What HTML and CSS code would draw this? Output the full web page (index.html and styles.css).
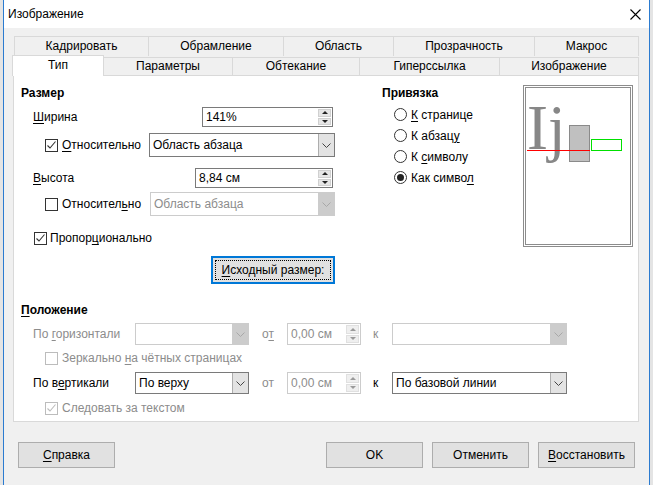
FILE: index.html
```html
<!DOCTYPE html>
<html lang="ru">
<head>
<meta charset="utf-8">
<title>Изображение</title>
<link rel="stylesheet" href="styles.css">
</head>
<body>
<div class="window">
  <div class="titlebar">
    <span class="title">Изображение</span>
    <svg class="close" width="11" height="11" viewBox="0 0 11 11"><path d="M0.5 0.5 L10.5 10.5 M10.5 0.5 L0.5 10.5" stroke="#000" stroke-width="1.1" fill="none"/></svg>
  </div>
  <div class="main">
    <div class="tabs row1">
      <div class="tab w1">Кадрировать</div>
      <div class="tab w2">Обрамление</div>
      <div class="tab w3">Область</div>
      <div class="tab w4">Прозрачность</div>
      <div class="tab w5">Макрос</div>
    </div>
    <div class="tabs row2">
      <div class="tab sel w6">Тип</div>
      <div class="tab w7">Параметры</div>
      <div class="tab w8">Обтекание</div>
      <div class="tab w9">Гиперссылка</div>
      <div class="tab w10">Изображение</div>
    </div>
    <div class="panel">
      <div class="top">
        <div class="col-size">
          <div class="h">Размер</div>
          <div class="row r-w">
            <span class="lbl ind1"><u>Ш</u>ирина</span>
            <div class="spin sw1"><span class="val">141%</span><span class="sbtns"><span class="sb"><i class="up"></i></span><span class="sb"><i class="dn"></i></span></span></div>
          </div>
          <div class="row r-rel">
            <span class="cb ind2"><svg width="11" height="11" viewBox="0 0 11 11"><polyline points="1.5,5.5 4,8 9.5,1.5" fill="none" stroke="#333" stroke-width="1.1"/></svg></span>
            <span class="lbl cbl"><u>О</u>тносительно</span>
            <div class="sel-box sb1"><span class="val">Область абзаца</span><span class="dd"><svg width="9" height="5" viewBox="0 0 9 5"><polyline points="0.5,0.5 4.5,4.5 8.5,0.5" fill="none" stroke="#444" stroke-width="1"/></svg></span></div>
          </div>
          <div class="row r-h">
            <span class="lbl ind1"><u>В</u>ысота</span>
            <div class="spin sw2"><span class="val">8,84 см</span><span class="sbtns"><span class="sb"><i class="up"></i></span><span class="sb"><i class="dn"></i></span></span></div>
          </div>
          <div class="row r-rel2">
            <span class="cb ind2"></span>
            <span class="lbl cbl">Относител<u>ь</u>но</span>
            <div class="sel-box sb2 dis"><span class="val">Область абзаца</span><span class="dd"><svg width="9" height="5" viewBox="0 0 9 5"><polyline points="0.5,0.5 4.5,4.5 8.5,0.5" fill="none" stroke="#a8a8a8" stroke-width="1"/></svg></span></div>
          </div>
          <div class="row r-prop">
            <span class="cb ind3"><svg width="11" height="11" viewBox="0 0 11 11"><polyline points="1.5,5.5 4,8 9.5,1.5" fill="none" stroke="#333" stroke-width="1.1"/></svg></span>
            <span class="lbl cbl2">Пропор<u>ц</u>ионально</span>
          </div>
          <div class="row r-btn">
            <div class="btn focus"><span class="focusrect"><u>И</u>сходный размер:</span></div>
          </div>
        </div>
        <div class="col-anchor">
          <div class="h">Привязка</div>
          <div class="radios">
            <div class="rrow"><span class="radio"></span><span class="lbl"><u>К</u> странице</span></div>
            <div class="rrow"><span class="radio"></span><span class="lbl">К абзац<u>у</u></span></div>
            <div class="rrow"><span class="radio"></span><span class="lbl">К <u>с</u>имволу</span></div>
            <div class="rrow"><span class="radio on"></span><span class="lbl">Как симво<u>л</u></span></div>
          </div>
        </div>
        <div class="preview">
          <svg width="110" height="162" viewBox="0 0 110 162">
            <rect x="0.5" y="0.5" width="109" height="161" fill="#fff" stroke="#8c8c8c"/>
            <rect x="2.5" y="2.5" width="105" height="157" fill="#fff" stroke="#8c8c8c"/>
            <text x="4" y="64" font-family="Liberation Serif, serif" font-size="63" fill="#878787">Ij</text>
            <rect x="46.5" y="40.5" width="20" height="36" fill="#c0c0c0" stroke="#8a8a8a"/>
            <line x1="4" y1="65.5" x2="67" y2="65.5" stroke="#ff0000" stroke-width="1"/>
            <rect x="68.5" y="54.5" width="30" height="11" fill="none" stroke="#00e000"/>
          </svg>
        </div>
      </div>
      <div class="pos">
        <div class="h"><u>П</u>оложение</div>
        <div class="row prow p1">
          <span class="lbl plbl dtext">По <u>г</u>оризонтали</span>
          <div class="sel-box ps1 dis"><span class="val"></span><span class="dd"><svg width="9" height="5" viewBox="0 0 9 5"><polyline points="0.5,0.5 4.5,4.5 8.5,0.5" fill="none" stroke="#a8a8a8" stroke-width="1"/></svg></span></div>
          <span class="lbl ot dtext">о<u>т</u></span>
          <div class="spin ps2 dis"><span class="val">0,00 см</span><span class="sbtns"><span class="sb"><i class="up"></i></span><span class="sb"><i class="dn"></i></span></span></div>
          <span class="lbl kk dtext">к</span>
          <div class="sel-box ps3 dis"><span class="val"></span><span class="dd"><svg width="9" height="5" viewBox="0 0 9 5"><polyline points="0.5,0.5 4.5,4.5 8.5,0.5" fill="none" stroke="#a8a8a8" stroke-width="1"/></svg></span></div>
        </div>
        <div class="row crow c1">
          <span class="cb dcb ind2"></span>
          <span class="lbl cbl dtext">Зеркально <u>н</u>а чётных страницах</span>
        </div>
        <div class="row prow p2">
          <span class="lbl plbl">По в<u>е</u>ртикали</span>
          <div class="sel-box ps1"><span class="val">По верху</span><span class="dd"><svg width="9" height="5" viewBox="0 0 9 5"><polyline points="0.5,0.5 4.5,4.5 8.5,0.5" fill="none" stroke="#444" stroke-width="1"/></svg></span></div>
          <span class="lbl ot dtext">от</span>
          <div class="spin ps2 dis"><span class="val">0,00 см</span><span class="sbtns"><span class="sb"><i class="up"></i></span><span class="sb"><i class="dn"></i></span></span></div>
          <span class="lbl kk">к</span>
          <div class="sel-box ps3"><span class="val">По базовой линии</span><span class="dd"><svg width="9" height="5" viewBox="0 0 9 5"><polyline points="0.5,0.5 4.5,4.5 8.5,0.5" fill="none" stroke="#444" stroke-width="1"/></svg></span></div>
        </div>
        <div class="row crow c2">
          <span class="cb dcb ind2"><svg width="11" height="11" viewBox="0 0 11 11"><polyline points="1.5,5.5 4,8 9.5,1.5" fill="none" stroke="#bcbcbc" stroke-width="1.1"/></svg></span>
          <span class="lbl cbl dtext">Следовать за текстом</span>
        </div>
      </div>
    </div>
    <div class="footer">
      <div class="btn"><span><u>С</u>правка</span></div>
      <div class="btn ok">OK</div>
      <div class="btn gap">Отменить</div>
      <div class="btn gap"><span><u>В</u>осстановить</span></div>
    </div>
  </div>
</div>
<div class="desk"></div>
</body>
</html>
```

FILE: styles.css
```css
html, body {
  margin: 0;
  padding: 0;
}
body {
  width: 653px;
  height: 485px;
  overflow: hidden;
  background: #e4e4e4;
  font-family: "Liberation Sans", Arial, sans-serif;
  font-size: 12px;
  line-height: 16px;
  color: #000;
}
u { text-decoration: underline; text-underline-offset: 2px; }

.window {
  margin-left: 3px;
  width: 645px;
  border: 1px solid #2b7bd0;
  border-top: none;
  background: #f0f0f0;
}
.titlebar {
  height: 28px;
  background: #fff;
  display: flex;
  align-items: center;
  justify-content: space-between;
  padding-left: 4px;
}
.title { font-size: 12px; }
.close { margin-right: 8px; }

.main {
  height: 454px;
  background: #f0f0f0;
}

.tabs { display: flex; }
.row1 { margin-top: 8px; margin-left: 10px; height: 20px; }
.row2 { margin-top: -1px; margin-left: 8px; height: 20px; align-items: flex-end; }
.tab {
  box-sizing: border-box;
  border: 1px solid #d9d9d9;
  border-bottom: none;
  background: #f0f0f0;
  text-align: center;
  margin-left: -1px;
}
.tab:first-child { margin-left: 0; }
.row1 .tab { height: 20px; line-height: 19px; }
.row2 .tab { height: 18px; line-height: 17px; }
.row2 .tab.sel {
  height: 21px;
  margin-bottom: -1px;
  line-height: 19px;
  background: #fff;
  position: relative;
  z-index: 2;
}
.w1 { width: 135px; }
.w2 { width: 136px; }
.w3 { width: 111px; }
.w4 { width: 142px; }
.w5 { width: 105px; }
.w6 { width: 92px; }
.w7 { width: 130px; }
.w8 { width: 128px; }
.w9 { width: 141px; }
.w10 { width: 140px; }

.panel {
  position: relative;
  z-index: 1;
  margin-left: 9px;
  width: 626px;
  height: 347px;
  box-sizing: border-box;
  border: 1px solid #d9d9d9;
  background: #fff;
  padding: 9px 0 0 7px;
}
.top { display: flex; height: 199px; }
.col-size { width: 314px; display: flex; flex-direction: column; }
.col-anchor { margin-left: 47px; width: 141px; }
.preview { width: 110px; height: 162px; }
.preview svg { display: block; }

.h { font-weight: bold; height: 16px; line-height: 16px; }
.row { display: flex; align-items: center; }
.lbl { white-space: nowrap; }
.ind1 { margin-left: 12px; }
.ind2 { margin-left: 24px; }
.ind3 { margin-left: 13px; }
.cbl { margin-left: 4px; }
.cbl2 { margin-left: 3px; }

.r-w { margin-top: 6px; height: 20px; }
.r-rel { margin-top: 6px; height: 24px; }
.r-h { margin-top: 11px; height: 20px; }
.r-rel2 { margin-top: 4px; height: 24px; }
.r-prop { margin-top: 14px; height: 16px; }
.r-btn { margin-top: 10px; height: 28px; }

/* spin box */
.spin {
  box-sizing: border-box;
  height: 20px;
  border: 1px solid #7a7a7a;
  background: #fff;
  display: flex;
  align-items: stretch;
}
.spin .val { flex: 1; padding-left: 3px; line-height: 18px; white-space: nowrap; overflow: hidden; }
.sbtns {
  width: 13px;
  display: flex;
  flex-direction: column;
  padding: 1px 1px 1px 0;
  gap: 1px;
}
.sb {
  flex: 1;
  background: #e6e6e6;
  border: 1px solid #d0d0d0;
  display: flex;
  align-items: center;
  justify-content: center;
}
.sb i { width: 0; height: 0; border-left: 3px solid transparent; border-right: 3px solid transparent; }
.sb i.up { border-bottom: 3px solid #222; }
.sb i.dn { border-top: 3px solid #222; }
.sw1 { margin-left: auto; margin-right: 2px; width: 131px; }
.sw2 { margin-left: auto; margin-right: 2px; width: 138px; }

.spin.dis { border-color: #cccccc; }
.spin.dis .val { color: #8c8c8c; }
.spin.dis .sb { background: #efefef; border-color: #e0e0e0; }
.spin.dis .sb i.up { border-bottom-color: #9a9a9a; }
.spin.dis .sb i.dn { border-top-color: #9a9a9a; }

/* select */
.sel-box {
  box-sizing: border-box;
  height: 24px;
  border: 1px solid #7a7a7a;
  background: #fff;
  display: flex;
  align-items: stretch;
}
.sel-box .val { flex: 1; padding-left: 3px; line-height: 22px; white-space: nowrap; overflow: hidden; }
.sel-box .dd {
  width: 15px;
  background: #e3e3e3;
  border-left: 1px solid #adadad;
  display: flex;
  align-items: center;
  justify-content: center;
}
.sel-box.dis { border-color: #cccccc; }
.sel-box.dis .val { color: #8c8c8c; }
.sel-box.dis .dd { background: #cccccc; border-left-color: #cccccc; }
.sb1 { margin-left: auto; width: 186px; }
.sb2 { margin-left: auto; width: 185px; }

/* checkbox */
.cb {
  box-sizing: border-box;
  width: 13px;
  height: 13px;
  border: 1px solid #333;
  background: #fff;
  flex: none;
}
.cb svg { display: block; }
.cb.dcb { border-color: #bcbcbc; }

/* radio */
.radios { margin-top: 3px; }
.rrow { display: flex; align-items: center; height: 21px; }
.radio {
  box-sizing: border-box;
  width: 13px;
  height: 13px;
  margin-left: 12px;
  margin-right: 4px;
  border: 1px solid #333;
  border-radius: 50%;
  background: #fff;
  display: flex;
  align-items: center;
  justify-content: center;
}
.radio.on::after {
  content: "";
  width: 7px;
  height: 7px;
  border-radius: 50%;
  background: #222;
}

/* buttons */
.btn {
  box-sizing: border-box;
  width: 97px;
  height: 26px;
  border: 1px solid #adadad;
  background: #e1e1e1;
  display: flex;
  align-items: center;
  justify-content: center;
}
.btn.focus {
  margin-left: auto;
  width: 124px;
  height: 28px;
  border: 2px solid #0078d7;
  padding: 2px;
}
.focusrect {
  flex: 1;
  align-self: stretch;
  border: 1px dotted #000;
  display: flex;
  align-items: center;
  justify-content: center;
}

/* position */
.pos { margin-top: 18px; }
.prow { height: 22px; }
.prow .sel-box, .prow .spin { height: 22px; }
.prow .sel-box .val { line-height: 20px; }
.prow .spin .val { line-height: 20px; }
.p1 { margin-top: 5px; }
.c1 { margin-top: 5px; height: 16px; }
.p2 { margin-top: 6px; }
.c2 { margin-top: 6px; height: 16px; }
.plbl { margin-left: 12px; width: 102px; }
.ps1 { width: 114px; }
.ot { width: 25px; padding-left: 13px; }
.ps2 { width: 74px; }
.kk { width: 19px; padding-left: 12px; }
.ps3 { width: 175px; }
.dtext { color: #8c8c8c; }

.footer { display: flex; padding: 20px 0 0 14px; }
.ok { margin-left: 211px; }
.gap { margin-left: 9px; }

.desk { height: 2px; background: #26303a; }
```
